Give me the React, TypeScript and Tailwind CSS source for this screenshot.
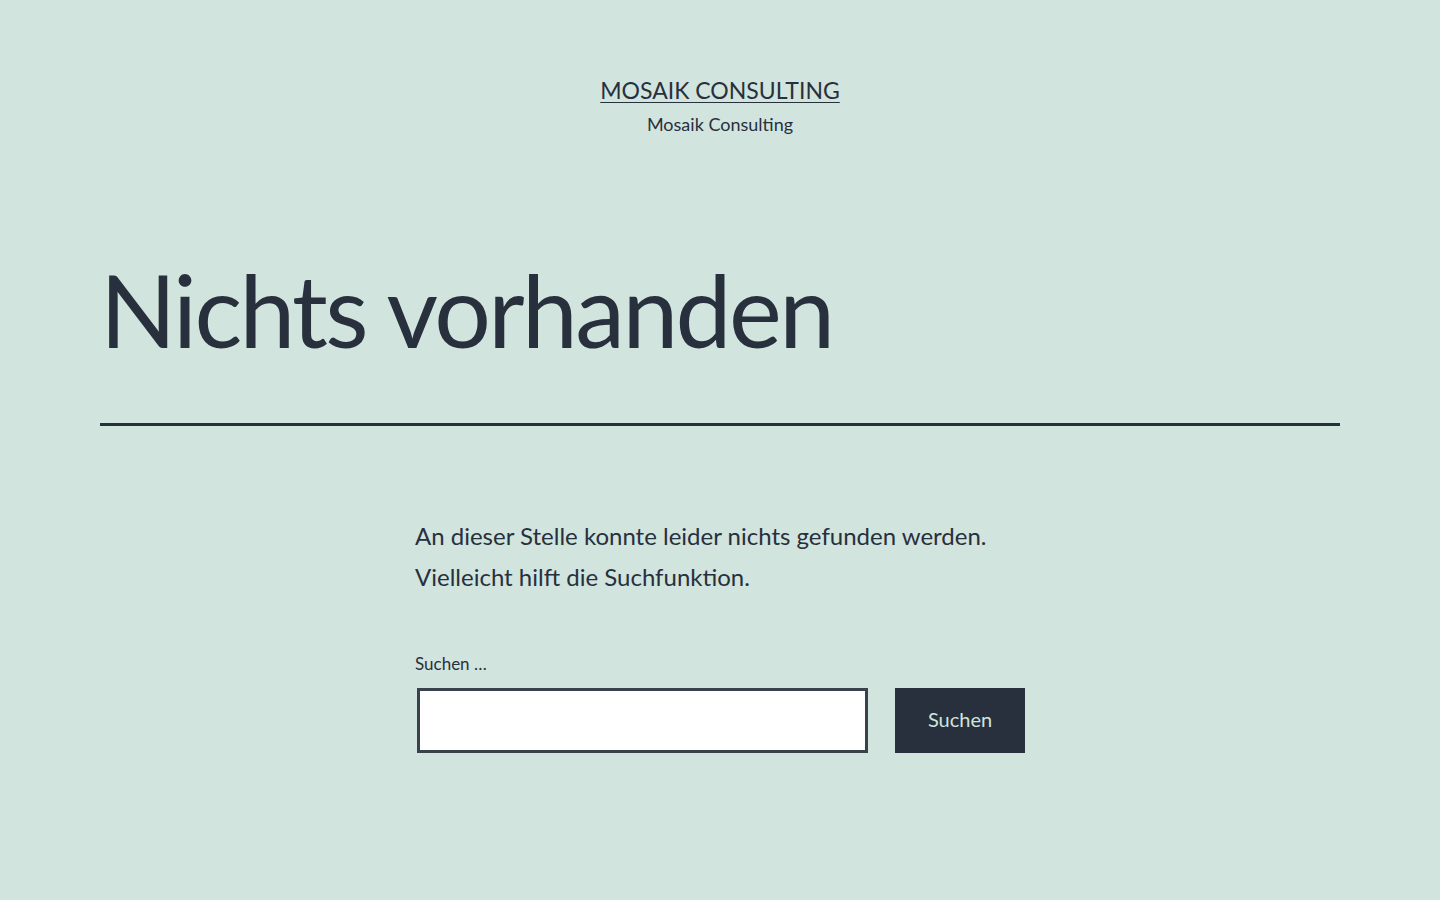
export default function App() {
  return (
    <div className="min-h-[900px] bg-[#d1e4dd] text-[#28303d] font-['Lato',sans-serif]">
      {/* site branding */}
      <header className="pt-[75px] text-center">
        <p className="text-[23px] leading-[31px] uppercase">
          <a href="#" className="underline underline-offset-[3px] decoration-1">
            Mosaik Consulting
          </a>
        </p>
        <p className="mt-[6px] text-[18px] leading-[25px]">Mosaik Consulting</p>
      </header>

      <main className="px-[100px]">
        <div className="mt-[115px] border-b-[3px] border-[#28303d] pb-[57px]">
          <h1 className="text-[100px] leading-[114px] tracking-[-2.6px]">Nichts vorhanden</h1>
        </div>

        <div className="mx-auto mt-[89px] w-[610px]">
          <p className="text-[24px] leading-[41px]">
            An dieser Stelle konnte leider nichts gefunden werden. Vielleicht hilft die Suchfunktion.
          </p>

          <form className="mt-[54px]" onSubmit={(e) => e.preventDefault()}>
            <label htmlFor="s" className="block text-[17px] leading-[25px]">
              Suchen …
            </label>
            <div className="mt-[12px] flex items-stretch">
              <input
                id="s"
                type="search"
                className="ml-[2px] h-[65px] w-[451px] border-[3px] border-[#39414d] bg-white px-3 text-[20px] outline-none"
              />
              <button
                type="submit"
                className="ml-[27px] h-[65px] w-[130px] bg-[#28303d] pb-[3px] text-[20px] text-[#d1e4dd]"
              >
                Suchen
              </button>
            </div>
          </form>
        </div>
      </main>
    </div>
  );
}
